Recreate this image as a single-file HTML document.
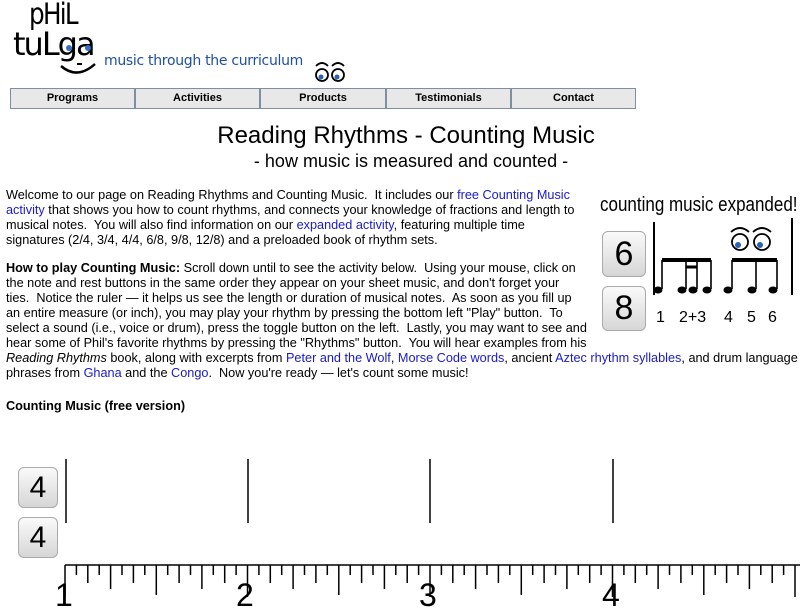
<!DOCTYPE html>
<html><head><style>
body{margin:0;background:#fff;font-family:"Liberation Sans",Arial,sans-serif;color:#000;width:800px;height:597px;overflow:hidden;position:relative}
.a{position:absolute}
.nav{position:absolute;top:88px;height:19px;background:#e8e8e8;border:1px solid #7d8fa0;font:bold 11px "Liberation Sans",sans-serif;text-align:center;line-height:19px}
a{color:#1a1acc;text-decoration:none}
.p{position:absolute;left:6px;font-size:12.7px;line-height:15px;white-space:nowrap}
.btn{position:absolute;width:38px;height:39px;border:1px solid #aaa;border-radius:6px;background:linear-gradient(#fafafa,#d6d6d6);font-size:30px;text-align:center;line-height:40px}
</style></head><body>
<div class="a" style="left:29px;top:-3px;font:29px 'DejaVu Sans',sans-serif;letter-spacing:-2px;transform:scaleX(.85);transform-origin:left">pHiL</div>
<div class="a" style="left:13px;top:25px;font:32px 'DejaVu Sans',sans-serif;letter-spacing:-2px">tuLga</div>
<svg class="a" style="left:55px;top:40px" width="50" height="40"><circle cx="14" cy="8" r="3" fill="#3a6fc0"/><circle cx="33" cy="8" r="3" fill="#3a6fc0"/><path d="M6 26 Q22 40 40 24" stroke="#000" stroke-width="2.5" fill="none"/><path d="M22 24h5" stroke="#000" stroke-width="2"/></svg>
<div class="a" style="left:104px;top:53px;font:14px 'DejaVu Sans',sans-serif;color:#1e4fa0;letter-spacing:-.3px">music through the curriculum</div>
<svg class="a" style="left:313px;top:60px" width="34" height="24"><path d="M3 6 Q9 0 15 6 M19 6 Q25 0 31 6" stroke="#000" stroke-width="1.8" fill="none"/><circle cx="9" cy="15" r="6" fill="#fff" stroke="#000" stroke-width="1.8"/><circle cx="25" cy="15" r="6" fill="#fff" stroke="#000" stroke-width="1.8"/><circle cx="8" cy="17" r="2.5" fill="#2a62b8"/><circle cx="24" cy="17" r="2.5" fill="#2a62b8"/></svg>
<div class="nav" style="left:10px;width:123px">Programs</div>
<div class="nav" style="left:135px;width:123px">Activities</div>
<div class="nav" style="left:260px;width:124px">Products</div>
<div class="nav" style="left:386px;width:123px">Testimonials</div>
<div class="nav" style="left:511px;width:123px">Contact</div>
<div class="a" style="left:0;width:812px;top:122px;text-align:center;font-size:24px">Reading Rhythms - Counting Music</div>
<div class="a" style="left:0;width:812px;top:151px;text-align:center;font-size:18px">&nbsp;&nbsp;- how music is measured and counted -</div>
<div class="p" style="top:188px">Welcome to our page on Reading Rhythms and Counting Music.&nbsp; It includes our <a>free Counting Music</a><br><a>activity</a> that shows you how to count rhythms, and connects your knowledge of fractions and length to<br>musical notes.&nbsp; You will also find information on our <a>expanded activity</a>, featuring multiple time<br>signatures (2/4, 3/4, 4/4, 6/8, 9/8, 12/8) and a preloaded book of rhythm sets.</div>
<div class="p" style="top:261px"><b>How to play Counting Music:</b> Scroll down until to see the activity below.&nbsp; Using your mouse, click on<br>the note and rest buttons in the same order they appear on your sheet music, and don't forget your<br>ties.&nbsp; Notice the ruler — it helps us see the length or duration of musical notes.&nbsp; As soon as you fill up<br>an entire measure (or inch), you may play your rhythm by pressing the bottom left "Play" button.&nbsp; To<br>select a sound (i.e., voice or drum), press the toggle button on the left.&nbsp; Lastly, you may want to see and<br>hear some of Phil's favorite rhythms by pressing the "Rhythms" button.&nbsp; You will hear examples from his<br><i>Reading Rhythms</i> book, along with excerpts from <a>Peter and the Wolf</a>, <a>Morse Code words</a>, ancient <a>Aztec rhythm syllables</a>, and drum language<br>phrases from <a>Ghana</a> and the <a>Congo</a>.&nbsp; Now you're ready — let's count some music!</div>
<div class="p" style="top:399px"><b>Counting Music (free version)</b></div>
<div class="a" style="left:600px;top:194px;background:#fff;width:200px;height:140px">
<div class="a" style="left:0;top:0;font-size:20px;transform:scaleX(.85);transform-origin:left;white-space:nowrap">counting music expanded!</div>
<div class="btn" style="left:2px;top:37px;width:42px;height:44px;line-height:44px;font-size:34px">6</div>
<div class="btn" style="left:2px;top:92px;width:42px;height:43px;line-height:43px;font-size:34px">8</div>
<svg class="a" style="left:0;top:0" width="200" height="140"><g stroke="#000" fill="none">
<path d="M54 28v73M192 24v77" stroke-width="2"/>
<path d="M62 95V66M86 95V66M97 95V66M111 95V66M132 95V66M156 95V66M177 95V66" stroke-width="1.6"/>
<path d="M62 66h49M132 66h45" stroke-width="4"/><path d="M86 73h11" stroke-width="3"/>
<path d="M131 38 Q140 30 149 38M153 38Q162 30 171 38" stroke-width="1.8"/>
<circle cx="140" cy="48" r="8" stroke-width="1.8"/><circle cx="162" cy="48" r="8" stroke-width="1.8"/></g>
<circle cx="138" cy="51" r="3" fill="#2a62b8"/><circle cx="160" cy="51" r="3" fill="#2a62b8"/>
<g fill="#000"><ellipse cx="58" cy="96" rx="4.5" ry="3.5"/><ellipse cx="82" cy="96" rx="4.5" ry="3.5"/><ellipse cx="93" cy="96" rx="4.5" ry="3.5"/><ellipse cx="107" cy="96" rx="4.5" ry="3.5"/><ellipse cx="128" cy="96" rx="4.5" ry="3.5"/><ellipse cx="152" cy="96" rx="4.5" ry="3.5"/><ellipse cx="173" cy="96" rx="4.5" ry="3.5"/></g></svg>
<div class="a" style="left:56px;top:115px;font-size:16px">1</div>
<div class="a" style="left:79px;top:115px;font-size:16px">2+3</div>
<div class="a" style="left:124px;top:115px;font-size:16px">4</div>
<div class="a" style="left:147px;top:115px;font-size:16px">5</div>
<div class="a" style="left:168px;top:115px;font-size:16px">6</div>
</div>
<div class="btn" style="left:18px;top:467px">4</div>
<div class="btn" style="left:18px;top:517px">4</div>
<svg class="a" style="left:0;top:455px" width="800" height="142" id="r"></svg>
<div class="a" style="left:55px;top:577px;font-size:32px">1</div>
<div class="a" style="left:236px;top:577px;font-size:32px">2</div>
<div class="a" style="left:419px;top:577px;font-size:32px">3</div>
<div class="a" style="left:602px;top:577px;font-size:32px">4</div>
<script>
var s='';var st=' stroke="#000" stroke-width="1.5"';
[66,248,430,613].forEach(function(x){s+='<line x1="'+x+'" y1="4" x2="'+x+'" y2="68"'+st+'/>';});
s+='<line x1="65" y1="110" x2="800" y2="110"'+st+'/>';
for(var i=0;i<=64;i++){var x=65+i*182.5/16;if(x>800)break;var m=i%16,l=m==0?40:m==8?30:m%4==0?24:m%2==0?18:10;s+='<line x1="'+x.toFixed(1)+'" y1="110" x2="'+x.toFixed(1)+'" y2="'+(110+l)+'"'+st+'/>';}
document.getElementById('r').innerHTML=s;
</script>
</body></html>
